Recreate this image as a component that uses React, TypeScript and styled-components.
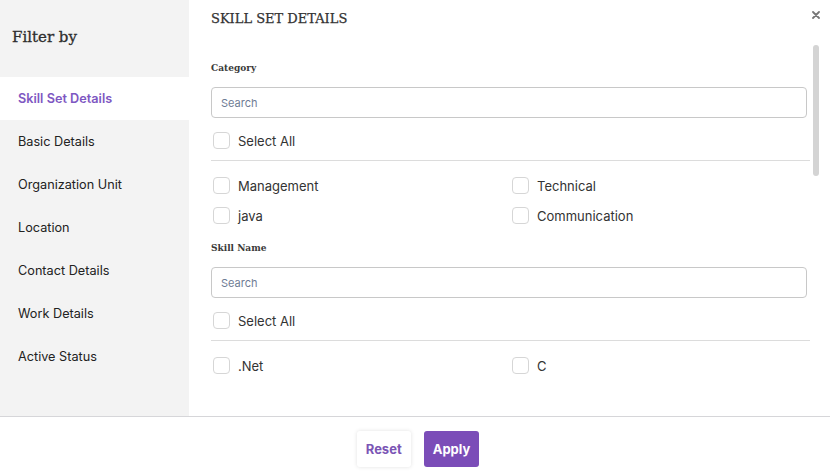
import React from 'react'
import styled, { createGlobalStyle } from 'styled-components'

const GlobalStyle = createGlobalStyle`
  html, body {
    margin: 0;
    padding: 0;
    background: #ffffff;
    overflow: hidden;
  }
  * {
    box-sizing: border-box;
  }
`

const SERIF = `"DejaVu Serif", "Liberation Serif", serif`
const SANS = `Inter, "Noto Sans", "Liberation Sans", sans-serif`
const PURPLE = '#7b4db8'

const navItems = [
  'Skill Set Details',
  'Basic Details',
  'Organization Unit',
  'Location',
  'Contact Details',
  'Work Details',
  'Active Status',
]

interface IGroup {
  label: string;
  options: string[];
}

const groups: IGroup[] = [
  { label: 'Category', options: ['Management', 'Technical', 'java', 'Communication'] },
  { label: 'Skill Name', options: ['.Net', 'C'] },
]

const FilterGroup: React.FC<IGroup> = ({ label, options }) => (
  <StyledGroup>
    <StyledLabel>{label}</StyledLabel>
    <StyledSearch placeholder={'Search'} />
    <StyledCheckRow $top={14}>
      <StyledBox />
      <span>Select All</span>
    </StyledCheckRow>
    <StyledDivider />
    <StyledOptions>
      {options.map(o => (
        <StyledCheckRow key={o} $top={0}>
          <StyledBox />
          <span>{o}</span>
        </StyledCheckRow>
      ))}
    </StyledOptions>
  </StyledGroup>
)

const App: React.FC = () => {
  return (
    <>
      <GlobalStyle />
      <StyledModal>
        <StyledBody>
          <StyledSidebar>
            <StyledSidebarTitle>Filter by</StyledSidebarTitle>
            {navItems.map((item, i) => (
              <StyledNavItem key={item} $active={i === 0}>{item}</StyledNavItem>
            ))}
          </StyledSidebar>
          <StyledMain>
            <StyledHeader>SKILL SET DETAILS</StyledHeader>
            <StyledClose aria-label={'close'}>
              <svg width="8" height="8" viewBox="0 0 8 8">
                <path d="M1 1L7 7M7 1L1 7" stroke="#777" strokeWidth="1.8" strokeLinecap="round" />
              </svg>
            </StyledClose>
            <StyledScroll>
              {groups.map(g => <FilterGroup key={g.label} {...g} />)}
            </StyledScroll>
            <StyledThumb />
          </StyledMain>
        </StyledBody>
        <StyledFooter>
          <StyledButton $primary={false}>Reset</StyledButton>
          <StyledButton $primary>Apply</StyledButton>
        </StyledFooter>
      </StyledModal>
    </>
  )
}

export default App;

const StyledModal = styled.div`
  width: 830px;
  height: 476px;
  display: flex;
  flex-direction: column;
  background: #fff;
  font-family: ${SANS};
`

const StyledBody = styled.div`
  flex: 1;
  display: flex;
  min-height: 0;
`

const StyledSidebar = styled.div`
  width: 189px;
  background: #f3f3f3;
  display: flex;
  flex-direction: column;
`

const StyledSidebarTitle = styled.div`
  height: 77px;
  padding-left: 12px;
  display: flex;
  align-items: center;
  padding-bottom: 4px;
  font-family: ${SERIF};
  font-size: 15px;
  color: #2e2e2e;
  -webkit-text-stroke: 0.3px #2e2e2e;
`

const StyledNavItem = styled.div<{ $active: boolean }>`
  height: 43px;
  padding-left: 18px;
  padding-bottom: 1px;
  display: flex;
  align-items: center;
  font-size: 12.7px;
  font-weight: ${p => (p.$active ? 600 : 400)};
  color: ${p => (p.$active ? '#7e57c2' : '#222')};
  background: ${p => (p.$active ? '#fff' : 'transparent')};
`

const StyledMain = styled.div`
  flex: 1;
  position: relative;
  display: flex;
  flex-direction: column;
  min-width: 0;
`

const StyledHeader = styled.div`
  height: 45px;
  padding: 11px 0 0 22px;
  font-family: ${SERIF};
  font-size: 13px;
  line-height: 16px;
  color: #333;
  -webkit-text-stroke: 0.25px #333;
`

const StyledClose = styled.button`
  position: absolute;
  top: 10px;
  right: 9px;
  width: 10px;
  height: 10px;
  padding: 0;
  border: none;
  background: transparent;
  display: flex;
  align-items: center;
  justify-content: center;
`

const StyledScroll = styled.div`
  flex: 1;
  overflow: hidden;
  padding: 16px 20px 0 22px;
`

const StyledThumb = styled.div`
  position: absolute;
  top: 45px;
  right: 11px;
  width: 6px;
  height: 131px;
  border-radius: 3px;
  background: #d4d4d4;
`

const StyledGroup = styled.div`
  display: flex;
  flex-direction: column;
  margin-bottom: 17px;
`

const StyledLabel = styled.div`
  font-family: ${SERIF};
  font-size: 9px;
  font-weight: 700;
  line-height: 14px;
  color: #3a3a3a;
`

const StyledSearch = styled.input`
  margin-top: 12px;
  width: 596px;
  height: 31px;
  border: 1px solid #c8c8c8;
  border-radius: 4px;
  padding: 0 9px;
  font-family: ${SANS};
  font-size: 11px;
  outline: none;
  &::placeholder {
    color: #6f7c95;
  }
`

const StyledCheckRow = styled.label<{ $top: number }>`
  margin-top: ${p => p.$top}px;
  display: flex;
  align-items: center;
  gap: 8px;
  padding-left: 2px;
  height: 17px;
  font-size: 13px;
  color: #333;
`

const StyledBox = styled.span`
  width: 17px;
  height: 17px;
  border: 1px solid #d6d6d6;
  border-radius: 4px;
  background: #fff;
  flex-shrink: 0;
`

const StyledDivider = styled.div`
  margin-top: 11px;
  height: 1px;
  width: 599px;
  background: #dcdcdc;
`

const StyledOptions = styled.div`
  margin-top: 16px;
  display: grid;
  grid-template-columns: 299px 1fr;
  row-gap: 13px;
`

const StyledFooter = styled.div`
  height: 60px;
  border-top: 1px solid #d6d6d9;
  display: flex;
  align-items: center;
  justify-content: center;
  gap: 13px;
  padding: 5px 0 0 6px;
`

const StyledButton = styled.button<{ $primary: boolean }>`
  height: 36px;
  padding: 0 9px;
  border: none;
  border-radius: 3px;
  font-family: ${SANS};
  font-size: 13px;
  font-weight: 700;
  color: ${p => (p.$primary ? '#fff' : '#7b55b5')};
  background: ${p => (p.$primary ? PURPLE : '#fff')};
  box-shadow: ${p => (p.$primary ? 'none' : '0 0 4px rgba(0, 0, 0, 0.12)')};
`
